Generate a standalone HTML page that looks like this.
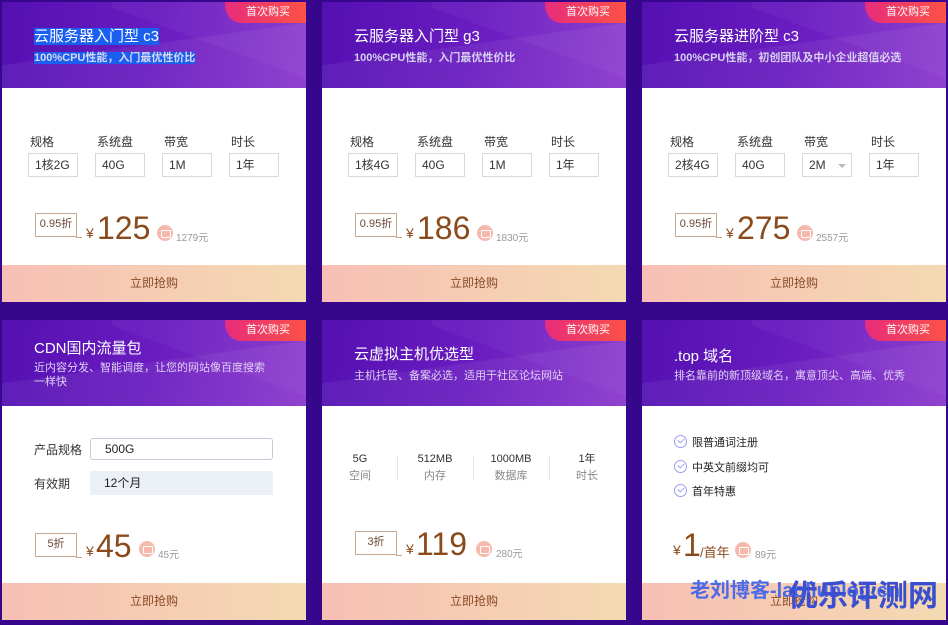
<!DOCTYPE html>
<html><head><meta charset="utf-8"><style>
*{margin:0;padding:0;box-sizing:border-box}
body{width:948px;height:625px;background:#36078c;font-family:"Liberation Sans","Noto Sans CJK SC",sans-serif;position:relative;overflow:hidden}
.c{position:absolute;width:304px;height:300px;background:#fff;overflow:hidden}
.h{position:absolute;left:0;top:0;width:304px;height:86px;background:linear-gradient(100deg,#5410b2 0%,#6a1cc0 50%,#8a36cc 100%);overflow:hidden}
.h:before{content:"";position:absolute;left:-40px;top:40px;width:420px;height:120px;background:rgba(255,255,255,.06);transform:rotate(-8deg)}
.h:after{content:"";position:absolute;left:120px;top:-60px;width:300px;height:120px;background:rgba(255,255,255,.04);transform:rotate(20deg)}
.b{position:absolute;right:0;top:0;width:81px;height:21px;border-radius:0 0 0 16px/0 0 0 18px;background:linear-gradient(90deg,#e82c7c,#fb5246);color:#fff;font-size:11px;line-height:21px;text-align:right;padding-right:16px;z-index:2}
.t{position:absolute;left:32px;color:#fff;font-size:15px;z-index:2;white-space:nowrap}
.s{position:absolute;left:32px;color:#e0d0f4;font-size:11px;z-index:2;line-height:14px;width:250px}
.f{position:absolute;left:0;top:263px;width:304px;height:37px;background:linear-gradient(90deg,#f8bfb5,#f3dab2);color:#8a4a26;font-size:12px;text-align:center;line-height:37px}
.lb{position:absolute;font-size:12px;color:#333}
.in{position:absolute;width:50px;height:24px;border:1px solid #d9d9d9;font-size:12px;color:#333;line-height:22px;padding-left:6px}
.d{position:absolute;width:42px;height:24px;border:1.5px solid #c9a78e;font-size:11px;color:#6b4430;text-align:center;line-height:21px;background:#fff}
.d:after{content:"";position:absolute;right:-6px;bottom:-2px;width:6px;height:1.5px;background:#c9a78e}
.y{position:absolute;font-size:14px;color:#8a4a1c}
.p{position:absolute;font-size:32px;color:#8a4a1c;line-height:34px}
.ic{position:absolute;width:16px;height:16px;border-radius:50%;background:#f6b9ab}
.ic:after{content:"";position:absolute;left:4px;top:5px;width:8px;height:6px;border:1.5px solid #fff;border-radius:1px}
.o{position:absolute;font-size:10px;color:#999}
.st{position:absolute;text-align:center;width:60px;font-size:11px;color:#333;line-height:17px}
.st span{color:#888;display:block}
.sep{position:absolute;width:1px;height:24px;background:#e6e6e6}
.ck{position:absolute;left:32px;font-size:11px;color:#222}
.ck i{display:inline-block;width:13px;height:13px;border:1px solid #9d9cf0;border-radius:50%;vertical-align:-2px;margin-right:5px;position:relative}
.ck i:after{content:"";position:absolute;left:3px;top:2px;width:5px;height:3px;border-left:1px solid #9d9cf0;border-bottom:1px solid #9d9cf0;transform:rotate(-45deg)}
.sel{background:#1a5ff0}
</style></head><body>

<div class="c" style="left:2px;top:2px">
<div class="h"></div><div class="b">首次购买</div>
<div class="t" style="top:23px"><span class="sel">云服务器入门型 c3</span></div>
<div class="s" style="top:49px;font-weight:bold;color:#d8d8f4"><span class="sel">100%CPU性能，入门最优性价比</span></div>
<div class="lb" style="left:28px;top:131px">规格</div><div class="lb" style="left:95px;top:131px">系统盘</div><div class="lb" style="left:162px;top:131px">带宽</div><div class="lb" style="left:229px;top:131px">时长</div>
<div class="in" style="left:26px;top:151px">1核2G</div><div class="in" style="left:93px;top:151px">40G</div><div class="in" style="left:160px;top:151px">1M</div><div class="in" style="left:227px;top:151px">1年</div>
<div class="d" style="left:33px;top:211px">0.95折</div><div class="y" style="left:84px;top:223px">¥</div><div class="p" style="left:95px;top:209px">125</div><div class="ic" style="left:155px;top:223px"></div><div class="o" style="left:174px;top:227px">1279元</div>
<div class="f">立即抢购</div></div>

<div class="c" style="left:322px;top:2px">
<div class="h"></div><div class="b">首次购买</div>
<div class="t" style="top:23px">云服务器入门型 g3</div>
<div class="s" style="top:49px;font-weight:bold;color:#d8d0f0">100%CPU性能，入门最优性价比</div>
<div class="lb" style="left:28px;top:131px">规格</div><div class="lb" style="left:95px;top:131px">系统盘</div><div class="lb" style="left:162px;top:131px">带宽</div><div class="lb" style="left:229px;top:131px">时长</div>
<div class="in" style="left:26px;top:151px">1核4G</div><div class="in" style="left:93px;top:151px">40G</div><div class="in" style="left:160px;top:151px">1M</div><div class="in" style="left:227px;top:151px">1年</div>
<div class="d" style="left:33px;top:211px">0.95折</div><div class="y" style="left:84px;top:223px">¥</div><div class="p" style="left:95px;top:209px">186</div><div class="ic" style="left:155px;top:223px"></div><div class="o" style="left:174px;top:227px">1830元</div>
<div class="f">立即抢购</div></div>

<div class="c" style="left:642px;top:2px">
<div class="h"></div><div class="b">首次购买</div>
<div class="t" style="top:23px">云服务器进阶型 c3</div>
<div class="s" style="top:49px;font-weight:bold;color:#d8d0f0">100%CPU性能，初创团队及中小企业超值必选</div>
<div class="lb" style="left:28px;top:131px">规格</div><div class="lb" style="left:95px;top:131px">系统盘</div><div class="lb" style="left:162px;top:131px">带宽</div><div class="lb" style="left:229px;top:131px">时长</div>
<div class="in" style="left:26px;top:151px">2核4G</div><div class="in" style="left:93px;top:151px">40G</div><div class="in" style="left:160px;top:151px">2M<span style="position:absolute;right:5px;top:10px;border:4px solid transparent;border-top-color:#bbb"></span></div><div class="in" style="left:227px;top:151px">1年</div>
<div class="d" style="left:33px;top:211px">0.95折</div><div class="y" style="left:84px;top:223px">¥</div><div class="p" style="left:95px;top:209px">275</div><div class="ic" style="left:155px;top:223px"></div><div class="o" style="left:174px;top:227px">2557元</div>
<div class="f">立即抢购</div></div>

<div class="c" style="left:2px;top:320px">
<div class="h"></div><div class="b">首次购买</div>
<div class="t" style="top:17px">CDN国内流量包</div>
<div class="s" style="top:41px;width:238px">近内容分发、智能调度，让您的网站像百度搜索一样快</div>
<div class="lb" style="left:32px;top:121px">产品规格</div>
<div style="position:absolute;left:88px;top:118px;width:183px;height:22px;border:1px solid #c3c9d6;border-radius:3px;font-size:12px;line-height:20px;padding-left:14px;color:#222">500G</div>
<div class="lb" style="left:32px;top:155px">有效期</div>
<div style="position:absolute;left:88px;top:151px;width:183px;height:24px;background:#ebeff6;font-size:12px;line-height:24px;padding-left:14px;color:#222">12个月</div>
<div class="d" style="left:33px;top:213px">5折</div><div class="y" style="left:84px;top:223px">¥</div><div class="p" style="left:94px;top:209px">45</div><div class="ic" style="left:137px;top:221px"></div><div class="o" style="left:156px;top:226px">45元</div>
<div class="f">立即抢购</div></div>

<div class="c" style="left:322px;top:320px">
<div class="h"></div><div class="b">首次购买</div>
<div class="t" style="top:23px">云虚拟主机优选型</div>
<div class="s" style="top:49px">主机托管、备案必选，适用于社区论坛网站</div>
<div class="st" style="left:8px;top:131px">5G<span>空间</span></div>
<div class="sep" style="left:75px;top:136px"></div>
<div class="st" style="left:83px;top:131px">512MB<span>内存</span></div>
<div class="sep" style="left:151px;top:136px"></div>
<div class="st" style="left:159px;top:131px">1000MB<span>数据库</span></div>
<div class="sep" style="left:227px;top:136px"></div>
<div class="st" style="left:235px;top:131px">1年<span>时长</span></div>
<div class="d" style="left:33px;top:211px">3折</div><div class="y" style="left:84px;top:221px">¥</div><div class="p" style="left:94px;top:207px">119</div><div class="ic" style="left:154px;top:221px"></div><div class="o" style="left:174px;top:225px">280元</div>
<div class="f">立即抢购</div></div>

<div class="c" style="left:642px;top:320px">
<div class="h"></div><div class="b">首次购买</div>
<div class="t" style="top:25px">.top 域名</div>
<div class="s" style="top:49px">排名靠前的新顶级域名，寓意顶尖、高端、优秀</div>
<div class="ck" style="top:114px"><i></i>限普通词注册</div>
<div class="ck" style="top:139px"><i></i>中英文前缀均可</div>
<div class="ck" style="top:163px"><i></i>首年特惠</div>
<div class="y" style="left:31px;top:222px">¥</div><div class="p" style="left:41px;top:208px">1</div><div style="position:absolute;left:58px;top:222px;font-size:13px;color:#8a4a1c">/首年</div><div class="ic" style="left:93px;top:222px"></div><div class="o" style="left:113px;top:226px">89元</div>
<div class="f">立即抢购</div></div>

<div style="position:absolute;left:690px;top:574px;font-size:20px;font-weight:bold;color:#4a6ae8;white-space:nowrap">老刘博客-laoliublog.cn</div>
<div style="position:absolute;left:788px;top:580px;font-size:30px;font-weight:bold;color:#3a4fd0;white-space:nowrap;line-height:34px">优乐评测网</div>
</body></html>
